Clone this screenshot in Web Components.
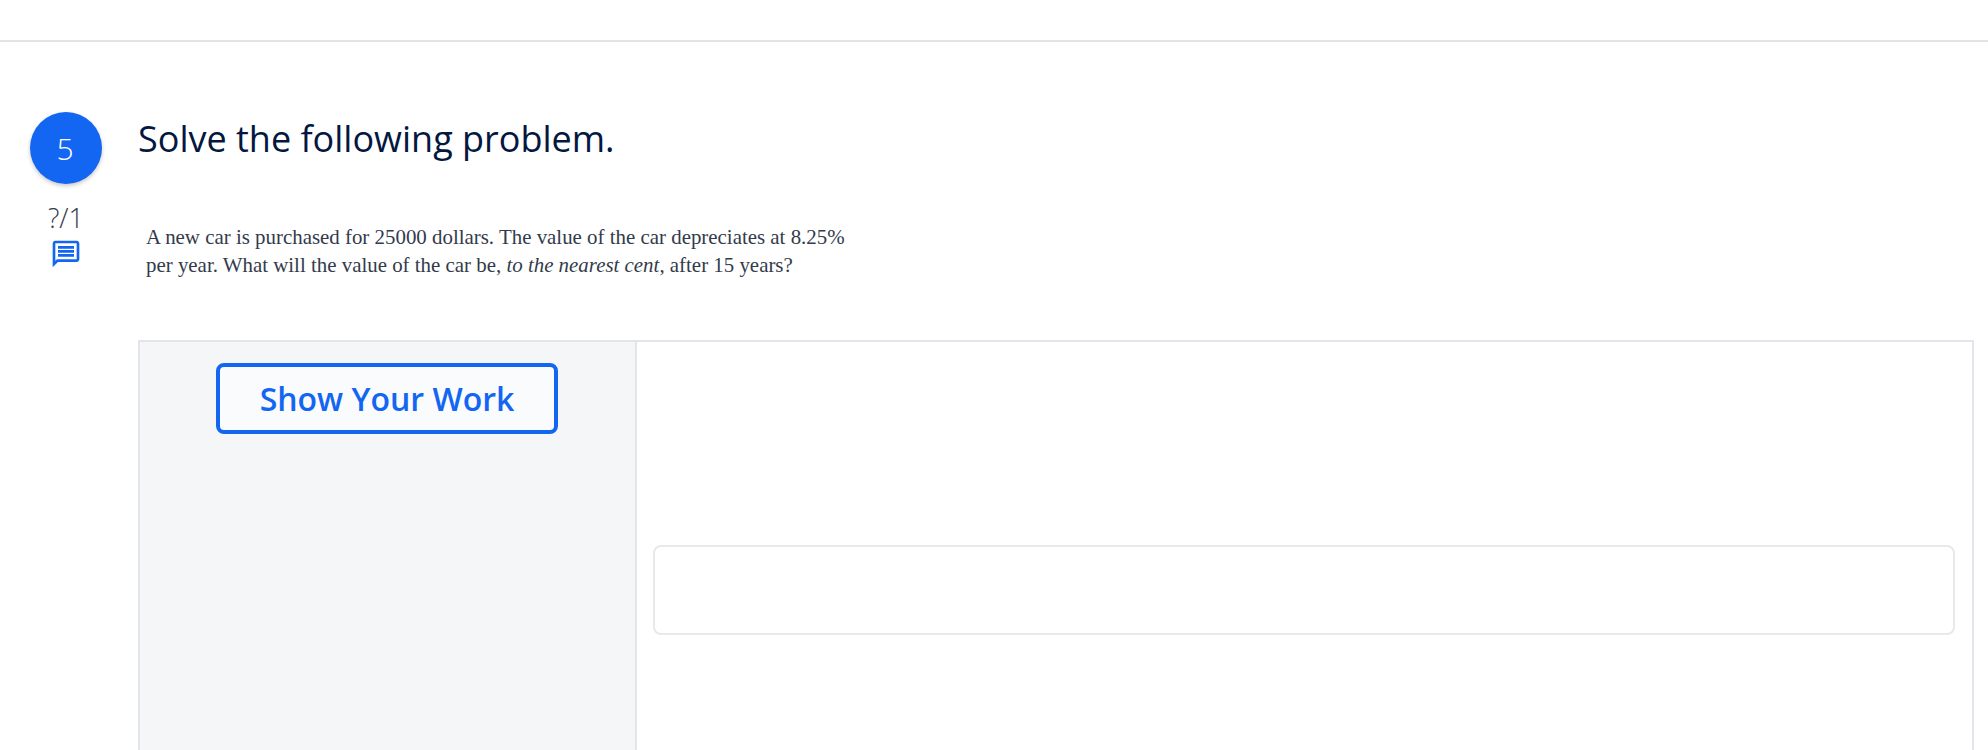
<!DOCTYPE html>
<html><head><meta charset="utf-8"><style>
html,body{margin:0;padding:0;background:#fff;height:750px;overflow:hidden}
</style></head><body>
<quiz-page></quiz-page>
<script>
function def(name, html){customElements.define(name,class extends HTMLElement{constructor(){super();this.attachShadow({mode:'open'}).innerHTML=html}})}
def('quiz-side',`<style>:host{display:flex;flex-direction:column;align-items:center;width:138px;flex:none;padding-top:70px;font-family:"Open Sans",sans-serif}
.n{width:72px;height:72px;border-radius:50%;background:#1266f1;color:#fff;font-size:30px;font-weight:300;display:flex;align-items:center;justify-content:center;box-sizing:border-box;padding-right:2px;box-shadow:0 2px 4px rgba(0,0,0,.22);margin-left:-6px}
.s{font-size:27px;font-weight:300;color:#333a4a;line-height:36px;margin:16px 0 0 -6px}
svg{display:block;margin:2px 0 0 -6px}</style>
<div class="n">5</div><div class="s">?/1</div>
<svg width="32" height="32" viewBox="0 0 24 24" fill="#1266f1"><path d="M20 2H4c-1.100 0-2 .9-2 2v18l4-4h14c1.100 0 2-.9 2-2V4c0-1.100-.9-2-2-2zm0 14H5.200L4 17.200V4h16v12zM6 12h12v2H6zm0-3h12v2H6zm0-3h12v2H6z"/></svg>`);
def('quiz-question',`<style>:host{display:block;margin-top:73px}
h1{margin:0;font:400 36px/48px "Open Sans",sans-serif;color:#03173f}
p{margin:60px 0 0 8px;padding-bottom:1px;width:715px;font:400 20.9px/28px "Liberation Serif",serif;font-variant-numeric:oldstyle-nums;color:#333b4b}</style>
<h1>Solve the following problem.</h1>
<p>A new car is purchased for 25000 dollars. The value of the car depreciates at 8.25% per year. What will the value of the car be, <i>to the nearest cent</i>, after 15 years?</p>`);
def('quiz-work',`<style>:host{display:flex;box-sizing:border-box;height:500px;margin:60px 14px 0 0;border:2px solid #e4e5ea}
.l{width:497px;flex:none;background:#f4f6f8;border-right:2px solid #e4e5ea;display:flex;align-items:flex-start;padding:21px 0 0 76px;box-sizing:border-box}
button{width:342px;height:71px;box-sizing:border-box;border:4px solid #1266f1;border-radius:8px;background:#fafbfd;color:#1266f1;font:600 32px "Open Sans",sans-serif}
.r{flex:1;padding:203px 17px 0 16px}.a{height:86px;border:2px solid #e8e9ed;border-radius:8px}</style>
<div class="l"><button>Show Your Work</button></div><div class="r"><div class="a"></div></div>`);
def('quiz-page',`<style>:host{display:block;height:750px;overflow:hidden}
.t{height:40px;border-bottom:2px solid #e3e5e5}.m{display:flex}.c{flex:1;min-width:0}</style>
<div class="t"></div><div class="m"><quiz-side></quiz-side><div class="c"><quiz-question></quiz-question><quiz-work></quiz-work></div></div>`);
</script></body></html>
